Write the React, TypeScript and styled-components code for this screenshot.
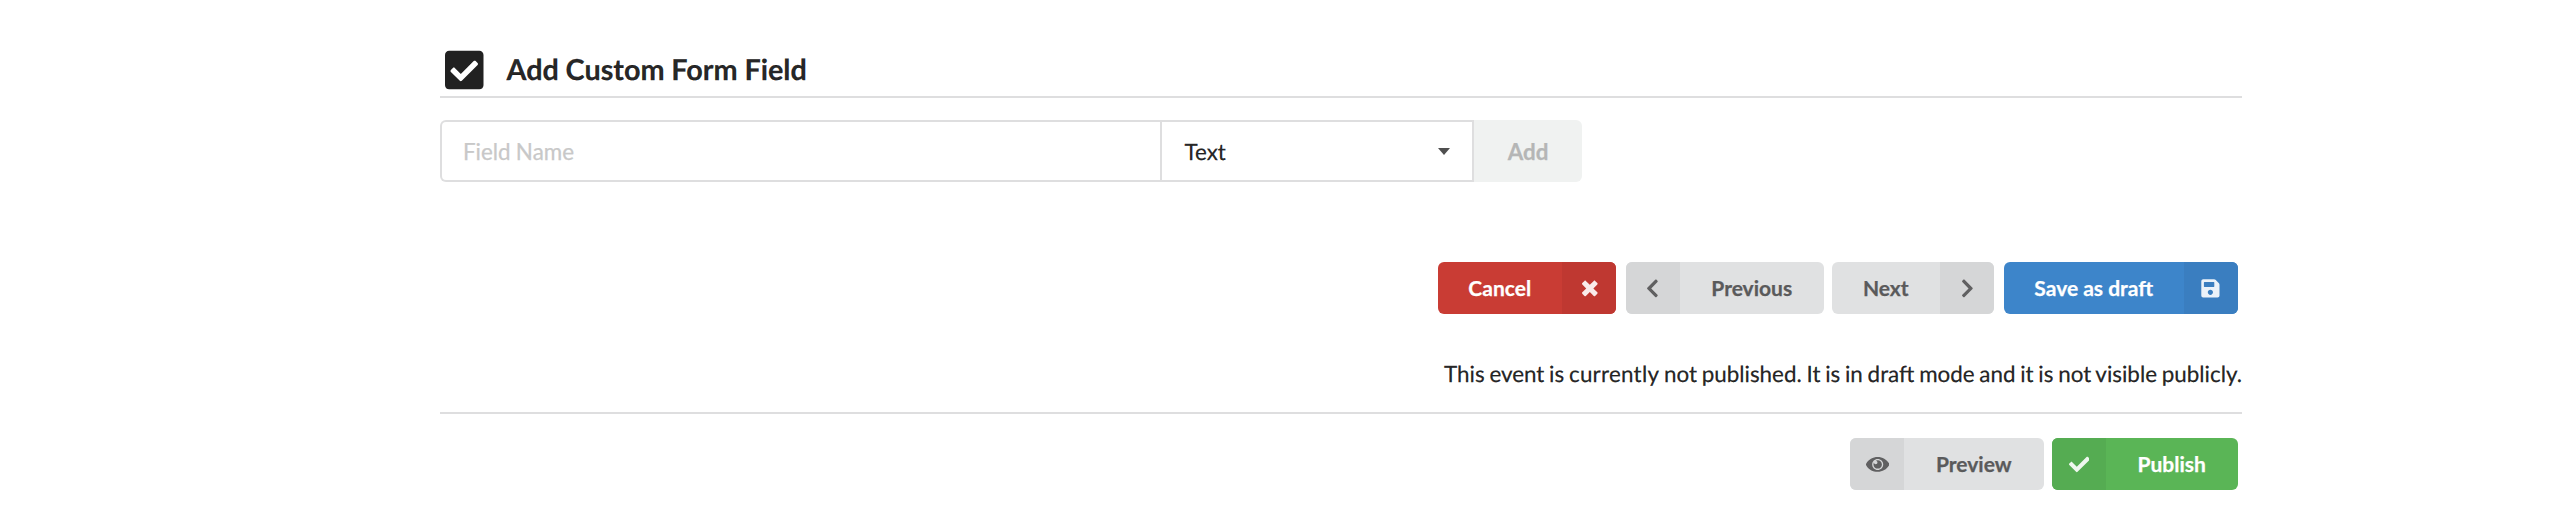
import React from "react";
import styled, { createGlobalStyle } from "styled-components";
import { FaCheck, FaCheckSquare, FaChevronLeft, FaChevronRight, FaSave } from "react-icons/fa";

const GlobalStyle = createGlobalStyle`
  *, *::before, *::after { box-sizing: border-box; }
  body {
    margin: 0;
    background: #fff;
    color: rgba(0, 0, 0, 0.87);
    font-family: Lato, "Liberation Sans", sans-serif;
    font-size: 22.4px;
    -webkit-font-smoothing: antialiased;
    -webkit-text-stroke: 0.25px currentColor;
    text-rendering: geometricPrecision;
  }
`;

const Page = styled.main`
  width: 1802px;
  height: 506px;
  margin: 0 0 0 440px;
  display: flex;
  flex-direction: column;
`;

const Header = styled.h3`
  display: flex;
  align-items: center;
  height: 98px;
  margin: 0 0 22px;
  padding: 44px 0 0 5px;
  border-bottom: 2px solid #dededf;
  font-size: 28.8px;
  font-weight: 700;
  line-height: 36px;
  word-spacing: -0.3px;

  svg {
    width: 38.5px;
    height: 44px;
    margin: 0 23px 0 0;
  }
`;

const FieldRow = styled.div`
  display: flex;
  height: 62px;
`;

const NameInput = styled.input`
  width: 720px;
  padding: 0 22px 0 21px;
  border: 2px solid #dededf;
  border-right: 0;
  border-radius: 6px 0 0 6px;
  outline: 0;
  font: inherit;
  color: inherit;
  word-spacing: -0.5px;
  &::placeholder { color: #c8c8c8; opacity: 1; }
`;

const TypeSelect = styled.div`
  display: flex;
  align-items: center;
  justify-content: space-between;
  width: 314px;
  padding: 0 22px 0 22.5px;
  border: 2px solid #dededf;
`;

const Caret = styled.svg`
  width: 12px;
  height: 7px;
  fill: #4f4f4f;
`;

const AddButton = styled.button`
  width: 108px;
  padding: 0;
  border: 0;
  border-radius: 0 6px 6px 0;
  background: #f0f2f1;
  color: #b5b6b6;
  font: inherit;
  font-weight: 700;
`;

const Actions = styled.div<{ $top: number }>`
  display: flex;
  justify-content: flex-end;
  gap: 8px;
  margin-top: ${(p) => p.$top}px;
  padding-right: 4px;
`;

const tones = {
  red: { bg: "#c93c34", side: "#bf3831", fg: "#fff", icon: "#f9ebea" },
  grey: { bg: "#e0e1e2", side: "#d5d6d7", fg: "#5a5a5b", icon: "#606061" },
  blue: { bg: "#3d85ca", side: "#3a7ec0", fg: "#fff", icon: "#ebf2f9" },
  green: { bg: "#5ab556", side: "#55ac52", fg: "#fff", icon: "#eef7ee" },
};

type Tone = keyof typeof tones;

const Button = styled.button<{ $tone: Tone; $width: number; $left?: boolean; $gap?: number }>`
  display: flex;
  flex-direction: ${(p) => (p.$left ? "row-reverse" : "row")};
  width: ${(p) => p.$width}px;
  height: 52px;
  margin: 0 ${(p) => p.$gap ?? 0}px 0 0;
  padding: 0;
  overflow: hidden;
  border: 0;
  border-radius: 6px;
  background: ${(p) => tones[p.$tone].bg};
  color: ${(p) => tones[p.$tone].fg};
  font: 700 21px/52px Lato, "Liberation Sans", sans-serif;
`;

const Label = styled.span`
  flex: 1;
  padding-right: 0.5px;
  text-align: center;
  white-space: nowrap;
`;

const IconCell = styled.span<{ $tone: Tone; $shift: number }>`
  display: flex;
  align-items: center;
  justify-content: center;
  width: 54px;
  height: 52px;
  padding: 1px 2px 0 ${(p) => 2 + p.$shift * 2}px;
  background: ${(p) => tones[p.$tone].side};
  color: ${(p) => tones[p.$tone].icon};
  svg { height: 20.8px; width: auto; fill: currentColor; }
`;

const Status = styled.p`
  margin: 43px 0 0;
  height: 55px;
  line-height: 34px;
  text-align: right;
  white-space: nowrap;
  word-spacing: -1px;
`;

const Loose = styled.span`
  letter-spacing: 0.25px;
`;

const Divider = styled.hr`
  width: 100%;
  height: 2px;
  margin: 0;
  border: 0;
  background: #dededf;
`;

const TimesIcon = () => (
  <svg viewBox="0 0 384 512">
    <path d="M323.1 441l53.9-53.9c9.4-9.4 9.4-24.5 0-33.9L279.8 256l97.2-97.2c9.4-9.4 9.4-24.5 0-33.9L323.1 71c-9.4-9.4-24.5-9.4-33.9 0L192 168.2 94.8 71c-9.4-9.4-24.5-9.4-33.9 0L7 124.9c-9.4 9.4-9.4 24.5 0 33.9l97.2 97.2L7 353.2c-9.4 9.4-9.4 24.5 0 33.9L60.9 441c9.4 9.4 24.5 9.4 33.9 0l97.2-97.2 97.2 97.2c9.3 9.3 24.5 9.3 33.9 0z" />
  </svg>
);

const EyeIcon = () => (
  <svg viewBox="0 0 576 512">
    <path d="M569.354 231.631C512.969 135.949 407.81 72 288 72 168.14 72 63.004 135.994 6.646 231.631a47.999 47.999 0 0 0 0 48.739C63.031 376.051 168.19 440 288 440c119.86 0 224.996-63.994 281.354-159.631a47.997 47.997 0 0 0 0-48.738zM288 392c-75.162 0-136-60.827-136-136 0-75.162 60.826-136 136-136 75.162 0 136 60.826 136 136 0 75.162-60.826 136-136 136zm104-136c0 57.438-46.562 104-104 104s-104-46.562-104-104c0-17.708 4.431-34.379 12.236-48.973l-.001.032c0 23.651 19.173 42.823 42.824 42.823s42.824-19.173 42.824-42.823c0-23.651-19.173-42.824-42.824-42.824l-.032.001C253.621 156.431 270.292 152 288 152c57.438 0 104 46.562 104 104z" />
  </svg>
);

interface LabeledButtonProps {
  tone: Tone;
  width: number;
  icon: React.ReactNode;
  left?: boolean;
  gap?: number;
  shift?: number;
  children: React.ReactNode;
}

const LabeledButton = ({ tone, width, icon, left, gap, shift = 0, children }: LabeledButtonProps) => (
  <Button $tone={tone} $width={width} $left={left} $gap={gap}>
    <Label>{children}</Label>
    <IconCell $tone={tone} $shift={shift}>{icon}</IconCell>
  </Button>
);

export default function App() {
  return (
    <>
      <GlobalStyle />
      <Page>
        <Header>
          <FaCheckSquare />
          Add Custom Form Field
        </Header>
        <FieldRow>
          <NameInput placeholder="Field Name" />
          <TypeSelect>
            Text
            <Caret viewBox="0 0 12 7"><path d="M0 0h12L6 7z" /></Caret>
          </TypeSelect>
          <AddButton disabled>Add</AddButton>
        </FieldRow>
        <Actions $top={80}>
          <LabeledButton tone="red" width={178} gap={2} shift={0.9} icon={<TimesIcon />}>Cancel</LabeledButton>
          <LabeledButton tone="grey" width={198} left shift={-0.6} icon={<FaChevronLeft />}>Previous</LabeledButton>
          <LabeledButton tone="grey" width={162} gap={2} icon={<FaChevronRight />}>Next</LabeledButton>
          <LabeledButton tone="blue" width={234} shift={-0.6} icon={<FaSave />}>Save as draft</LabeledButton>
        </Actions>
        <Status>
          This event is <Loose>currently</Loose> not published. It is in draft mode and it is not visible publicly.
        </Status>
        <Divider />
        <Actions $top={24}>
          <LabeledButton tone="grey" width={194} left shift={0.8} icon={<EyeIcon />}>Preview</LabeledButton>
          <LabeledButton tone="green" width={186} left icon={<FaCheck />}>Publish</LabeledButton>
        </Actions>
      </Page>
    </>
  );
}
